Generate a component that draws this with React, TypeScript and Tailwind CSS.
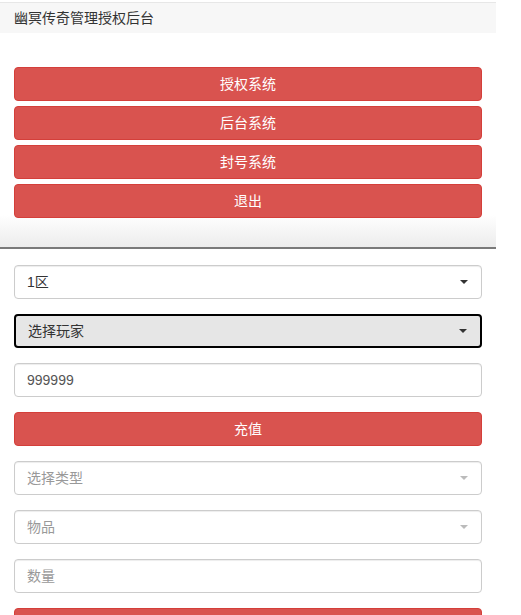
const FONT = "font-['Liberation_Sans','Noto_Sans_CJK_SC',sans-serif]"

const MENU = ['授权系统', '后台系统', '封号系统', '退出']

const Caret = ({ light }: { light?: boolean }) => (
    <span
        className={`h-0 w-0 border-x-[4px] border-t-[4px] border-x-transparent ${
            light ? 'border-t-[#bbb]' : 'border-t-[#333]'
        }`}
    />
)

const RedButton = ({ label }: { label: string }) => (
    <button className="flex h-[34px] w-full items-center justify-center rounded-[4px] border border-[#d43f3a] bg-[#d9534f] text-[14px] text-white">
        {label}
    </button>
)

const Select = ({ label, placeholder, focused }: { label: string; placeholder?: boolean; focused?: boolean }) => (
    <div
        className={`flex h-[34px] w-full items-center justify-between rounded-[4px] pl-[12px] pr-[13px] text-[14px] ${
            focused
                ? 'border-2 border-black bg-[#e6e6e6] pl-[11px] text-[#333]'
                : 'border border-[#ccc] bg-white shadow-[inset_0_1px_1px_rgba(0,0,0,0.075)]'
        } ${placeholder ? 'text-[#999]' : 'text-[#333]'}`}
    >
        <span>{label}</span>
        <Caret light={placeholder} />
    </div>
)

const Input = ({ value, placeholder }: { value?: string; placeholder?: string }) => (
    <div className="flex h-[34px] w-full items-center rounded-[4px] border border-[#ccc] bg-white px-[12px] text-[14px] shadow-[inset_0_1px_1px_rgba(0,0,0,0.075)]">
        {value ? <span className="text-[#555]">{value}</span> : <span className="text-[#999]">{placeholder}</span>}
    </div>
)

export default function App() {
    return (
        <div className={`${FONT} h-[615px] w-[496px] overflow-hidden bg-white`}>
            {/* Header */}
            <div className="mt-[2px] flex h-[31px] items-center border-t border-[#e7e7e7] bg-[#f7f7f7] px-[14px] text-[14px] text-[#333]">
                幽冥传奇管理授权后台
            </div>

            {/* Menu */}
            <div className="bg-gradient-to-b from-white from-[85%] to-[#ececec] px-[14px] pb-[29px] pt-[34px]">
                <div className="flex flex-col gap-[5px]">
                    {MENU.map((label) => (
                        <RedButton key={label} label={label} />
                    ))}
                </div>
            </div>
            <div className="h-[2px] bg-[#7a7a7a]" />

            {/* Form */}
            <div className="flex flex-col gap-[15px] px-[14px] pt-[16px]">
                <Select label="1区" />
                <Select label="选择玩家" focused />
                <Input value="999999" />
                <RedButton label="充值" />
                <Select label="选择类型" placeholder />
                <Select label="物品" placeholder />
                <Input placeholder="数量" />
                <RedButton label="发送" />
            </div>
        </div>
    )
}
